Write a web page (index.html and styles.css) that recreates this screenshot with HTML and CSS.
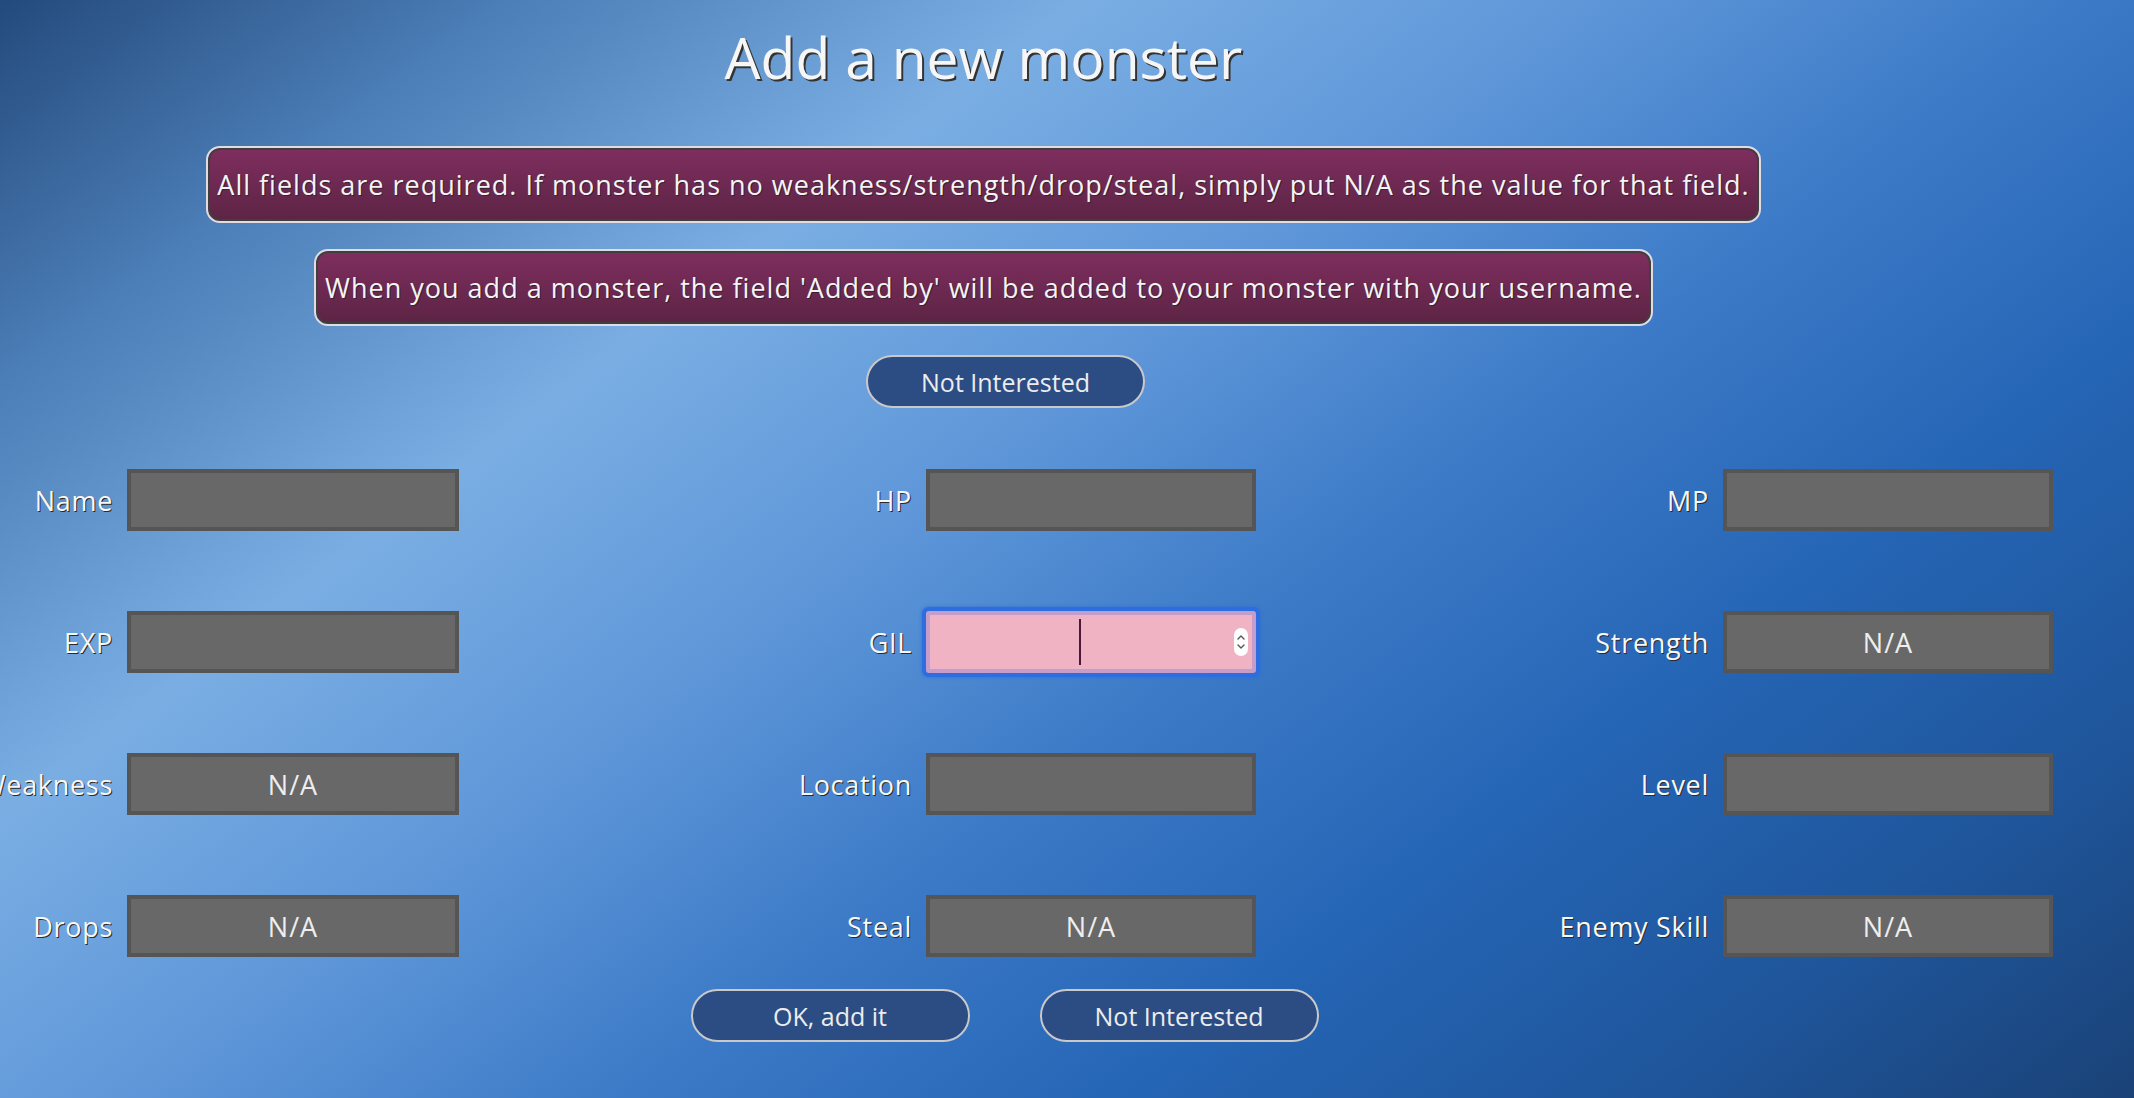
FILE: index.html
```html
<!DOCTYPE html>
<html lang="en">
<head>
<meta charset="utf-8">
<title>Add a new monster</title>
<link rel="stylesheet" href="styles.css">
</head>
<body>
<main class="page">
  <h1 class="title">Add a new monster</h1>
  <p class="notice">All fields are required. If monster has no weakness/strength/drop/steal, simply put N/A as the value for that field.</p>
  <p class="notice">When you add a monster, the field 'Added by' will be added to your monster with your username.</p>
  <div class="top-action"><button class="pill" type="button">Not Interested</button></div>

  <form class="fields">
    <label class="lbl">Name</label><input class="box" type="text" value="">
    <label class="lbl">HP</label><input class="box" type="text" value="">
    <label class="lbl">MP</label><input class="box" type="text" value="">

    <label class="lbl">EXP</label><input class="box" type="text" value="">
    <label class="lbl">GIL</label>
    <div class="focus-wrap">
      <input class="box box-focused" type="text" value="">
      <span class="caret"></span>
      <span class="spinner">
        <svg width="10" height="20" viewBox="0 0 10 20"><path d="M2 7 L5 4 L8 7 M2 13 L5 16 L8 13" fill="none" stroke="#555" stroke-width="1.4" stroke-linecap="round" stroke-linejoin="round"/></svg>
      </span>
    </div>
    <label class="lbl">Strength</label><input class="box" type="text" value="N/A">

    <label class="lbl">Weakness</label><input class="box" type="text" value="N/A">
    <label class="lbl">Location</label><input class="box" type="text" value="">
    <label class="lbl">Level</label><input class="box" type="text" value="">

    <label class="lbl">Drops</label><input class="box" type="text" value="N/A">
    <label class="lbl">Steal</label><input class="box" type="text" value="N/A">
    <label class="lbl">Enemy Skill</label><input class="box" type="text" value="N/A">
  </form>

  <div class="actions">
    <button class="pill" type="button">OK, add it</button>
    <button class="pill" type="button">Not Interested</button>
  </div>
</main>
</body>
</html>
```

FILE: styles.css
```css
html, body {
  margin: 0;
  padding: 0;
  height: 100%;
}

body {
  overflow: hidden;
  font-family: "Open Sans", "Noto Sans", sans-serif;
  color: #fff;
  background: linear-gradient(143deg,
    #244a7c 0%,
    #4b7db6 14%,
    #7aaee3 30%,
    #5f97d9 44%,
    #3c7ac7 58%,
    #2565b5 72%,
    #1f569c 86%,
    #1a4277 100%);
}

.page {
  width: 1967px;
  display: flex;
  flex-direction: column;
  align-items: center;
}

.title {
  margin: 22px 0 0;
  font-size: 57px;
  font-weight: 400;
  line-height: 70px;
  color: #f6f6f6;
  text-shadow: 2px 2px 0 #333;
}

.notice {
  margin: 0;
  padding: 0 9px;
  height: 73px;
  display: flex;
  align-items: center;
  font-size: 27px;
  letter-spacing: 1px;
  color: #f4f4f4;
  text-shadow: 1px 1px 0 #3a2030;
  border: 2px solid #e2dce2;
  border-radius: 14px;
  box-shadow: inset 0 0 0 2px #3f3f3f;
  background: linear-gradient(to bottom, #7f2e5f, #5c2444);
  white-space: nowrap;
}

.title + .notice {
  margin-top: 54px;
}

.notice + .notice {
  margin-top: 26px;
}

.top-action {
  margin-top: 29px;
  padding-left: 44px;
}

.pill {
  width: 279px;
  height: 53px;
  padding: 0;
  border: 2px solid #c9c9c9;
  border-radius: 27px;
  background: #2c4c84;
  color: #ececec;
  font-family: "Open Sans", "Noto Sans", sans-serif;
  font-size: 25px;
  cursor: pointer;
}

.fields {
  align-self: flex-start;
  margin-top: 61px;
  display: grid;
  grid-template-columns: 110px 332px 433px 330px 433px 330px;
  grid-auto-rows: 62px;
  column-gap: 17px;
  row-gap: 80px;
}

.lbl {
  display: flex;
  justify-content: flex-end;
  align-items: center;
  margin-right: -3px;
  white-space: nowrap;
  font-size: 27px;
  letter-spacing: 0.7px;
  color: #f8f8f8;
  text-shadow: 1px 1px 0 #2a2a2a;
}

.box {
  box-sizing: border-box;
  width: 100%;
  height: 62px;
  margin: 0;
  border: 4px solid #555;
  background: #686868;
  color: #eee;
  font-family: "Open Sans", "Noto Sans", sans-serif;
  font-size: 27px;
  letter-spacing: 1px;
  text-align: center;
  outline: none;
}

.focus-wrap {
  position: relative;
}

.box-focused {
  border: 4px solid #c59dcb;
  background: #efb3c4;
  border-radius: 3px;
  box-shadow: 0 0 0 4px #2c6de0, 0 0 3px 5px rgba(44, 109, 224, 0.5);
}

.caret {
  position: absolute;
  left: 153px;
  top: 8px;
  width: 2px;
  height: 46px;
  background: #4a1838;
}

.spinner {
  position: absolute;
  right: 8px;
  top: 17px;
  width: 14px;
  height: 28px;
  border-radius: 7px;
  background: #fff;
  display: flex;
  align-items: center;
  justify-content: center;
}

.actions {
  margin-top: 32px;
  padding-left: 42px;
  display: flex;
  gap: 70px;
}
```
